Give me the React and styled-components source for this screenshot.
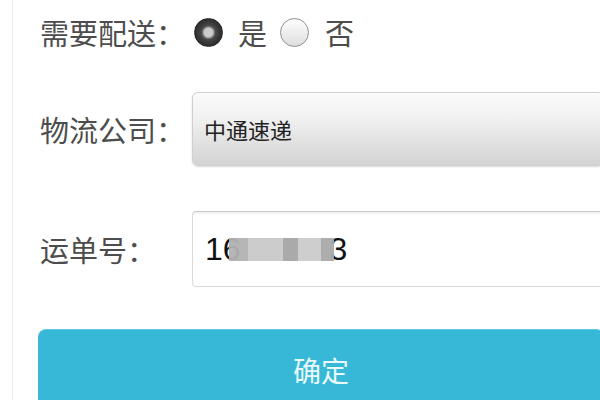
import React from "react";
import styled, { createGlobalStyle } from "styled-components";

const GlobalStyle = createGlobalStyle`
  html, body {
    margin: 0;
    padding: 0;
    background: #fff;
    overflow: hidden;
  }
  body {
    font-family: "Noto Sans CJK SC", "Noto Sans", sans-serif;
  }
`;

const Panel = styled.div`
  margin-left: 12px;
  width: 620px;
  border-left: 1px solid #ececec;
  padding: 0 28px 0 25px;
  height: 420px;
  box-sizing: border-box;
`;

const Row = styled.div`
  display: flex;
  align-items: center;
  height: ${(p) => p.$height}px;
  margin-top: ${(p) => p.$top || 0}px;
`;

const Label = styled.label`
  flex: none;
  width: ${(p) => p.$width || 154}px;
  padding-left: 2px;
  box-sizing: border-box;
  font-size: 29px;
  color: #4d4d4d;
  white-space: nowrap;
`;

const Radio = styled.span`
  flex: none;
  width: 29px;
  height: 29px;
  border-radius: 50%;
  box-sizing: border-box;
  margin: 0 ${(p) => p.$gap}px 0 ${(p) => p.$lead}px;
  background: ${(p) =>
    p.$checked
      ? "radial-gradient(circle at 50% 50%, #d2d2d2 0, #c6c6c6 4.5px, #8a8a8a 5.5px, #4a4a4a 7px, #3a3a3a 10px, #2c2c2c 14px)"
      : "linear-gradient(#fefefe, #dedede)"};
  border: 1px solid ${(p) => (p.$checked ? "#262626" : "#8f8f8f")};
`;

const Choice = styled.span`
  font-size: 29px;
  color: #4d4d4d;
`;

const Select = styled.div`
  flex: 1;
  height: 74px;
  display: flex;
  align-items: center;
  padding-left: 11px;
  box-sizing: border-box;
  border: 1px solid #cfcfcf;
  border-radius: 6px;
  background: linear-gradient(#fbfbfb 0%, #f1f1f1 35%, #d3d3d3 100%);
  box-shadow: 0 1px 2px rgba(0, 0, 0, 0.15);
  font-size: 22px;
  color: #222;
`;

const Input = styled.div`
  flex: 1;
  height: 76px;
  display: flex;
  align-items: center;
  padding-left: 12px;
  box-sizing: border-box;
  border: 1px solid #dadada;
  border-top-color: #c9c9c9;
  border-radius: 4px;
  background: #fff;
  box-shadow: inset 0 2px 2px rgba(0, 0, 0, 0.06);
  font-family: "Liberation Sans", Arial, sans-serif;
  font-size: 32px;
  color: #111;
`;

const Masked = styled.span`
  display: inline-block;
  width: 105px;
  height: 23px;
  margin: 0 -4px 0 -12px;
  background: linear-gradient(
    90deg,
    #b2b2b2 0 19px,
    #c9c9c9 19px 54px,
    #a6a6a6 54px 69px,
    #cbcbcb 69px 92px,
    #a9a9a9 92px 105px
  );
  opacity: 0.95;
`;

const Button = styled.button`
  display: block;
  width: 100%;
  height: 84px;
  margin-top: 42px;
  border: none;
  border-top: 1px solid #5cc8e2;
  border-radius: 8px;
  background: #38b8d7;
  color: #e9f8fc;
  font-family: "Noto Sans CJK SC", sans-serif;
  font-size: 28px;
  padding: 0 0 4px;
`;

export default function App() {
  return (
    <>
      <GlobalStyle />
      <Panel>
        <Row $height={64}>
          <Label $width={145}>需要配送：</Label>
          <Radio $checked $lead={11} $gap={15} />
          <Choice>是</Choice>
          <Radio $lead={13} $gap={16} />
          <Choice>否</Choice>
        </Row>
        <Row $height={74} $top={28}>
          <Label>物流公司：</Label>
          <Select>中通速递</Select>
        </Row>
        <Row $height={76} $top={45}>
          <Label>运单号：</Label>
          <Input>
            16
            <Masked />
            3
          </Input>
        </Row>
        <Button>确定</Button>
      </Panel>
    </>
  );
}
